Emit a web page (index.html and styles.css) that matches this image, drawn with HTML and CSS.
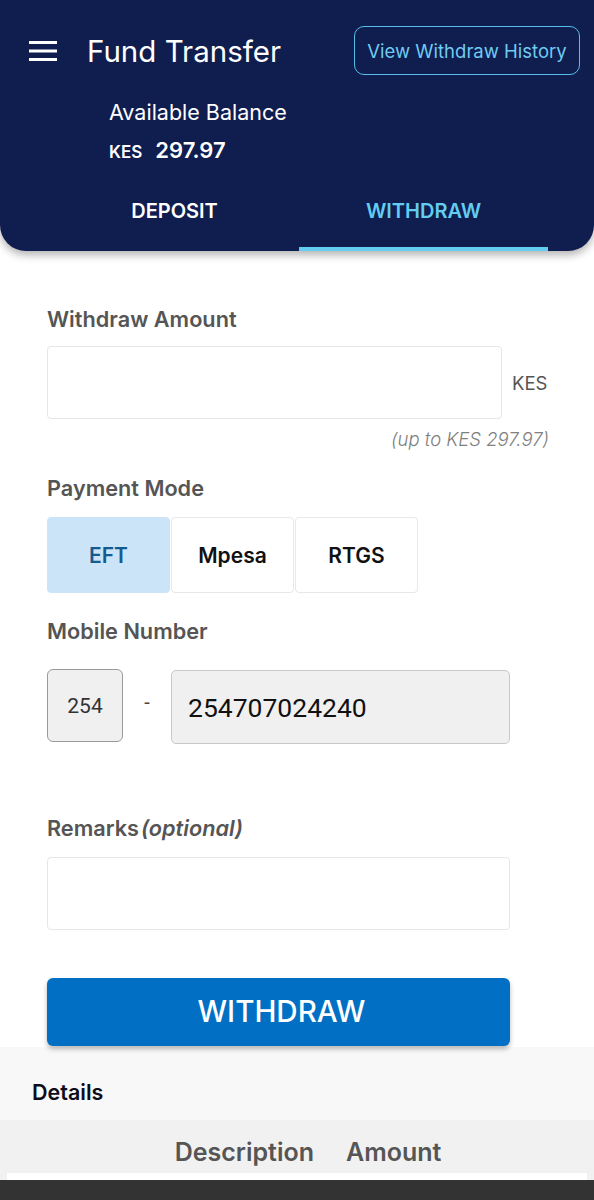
FILE: index.html
```html
<!DOCTYPE html>
<html>
<head>
<meta charset="utf-8">
<link rel="stylesheet" href="styles.css">
</head>
<body>
<div class="page">
  <header class="header">
    <div class="topbar">
      <svg class="menu" width="28" height="20" viewBox="0 0 28 20">
        <rect x="0" y="0" width="28" height="3" fill="#ffffff"/>
        <rect x="0" y="8.5" width="28" height="3" fill="#ffffff"/>
        <rect x="0" y="17" width="28" height="3" fill="#ffffff"/>
      </svg>
      <h1 class="title">Fund Transfer</h1>
      <button class="history-btn">View Withdraw History</button>
    </div>
    <div class="balance">
      <div class="balance-label">Available Balance</div>
      <div class="balance-value"><span class="cur">KES</span><span class="amt">297.97</span></div>
    </div>
    <nav class="tabs">
      <div class="tab">DEPOSIT</div>
      <div class="tab active">WITHDRAW</div>
    </nav>
  </header>

  <main class="form">
    <div class="label first">Withdraw Amount</div>
    <div class="amount-row">
      <div class="field amount-field"></div>
      <span class="unit">KES</span>
    </div>
    <div class="hint">(up to KES 297.97)</div>

    <div class="label mode-label">Payment Mode</div>
    <div class="modes">
      <div class="mode selected">EFT</div>
      <div class="mode">Mpesa</div>
      <div class="mode">RTGS</div>
    </div>

    <div class="label mobile-label">Mobile Number</div>
    <div class="mobile-row">
      <div class="code">254</div>
      <span class="dash">-</span>
      <div class="number">254707024240</div>
    </div>

    <div class="label remarks-label">Remarks<em class="opt">(optional)</em></div>
    <div class="field remarks-field"></div>

    <button class="submit">WITHDRAW</button>
  </main>

  <section class="details">
    <div class="details-title">Details</div>
  </section>
  <div class="table-head">
    <div class="cols">
      <span>Description</span>
      <span>Amount</span>
    </div>
    <div class="table-body"></div>
  </div>
  <div class="bottom-bar"></div>
</div>
</body>
</html>
```
FILE: styles.css
```css
* { box-sizing: border-box; }
html, body { margin: 0; padding: 0; background: #ffffff; }
body { font-family: Inter, "Noto Sans", sans-serif; width: 594px; height: 1200px; overflow: hidden; }
.page { display: flex; flex-direction: column; }

.header {
  background: #101d4f;
  border-radius: 0 0 26px 26px;
  box-shadow: 0 4px 8px rgba(0, 0, 0, 0.3);
  padding-top: 26px;
  color: #ffffff;
  position: relative;
  z-index: 2;
}
.topbar { display: flex; align-items: center; height: 49px; padding: 0 14px 0 29px; }
.menu { flex: none; }
.title {
  margin: 0 0 0 30px;
  font-family: Inter, sans-serif;
  font-weight: 400;
  font-size: 29.5px;
  line-height: 34px;
  color: #ffffff;
}
.history-btn {
  margin-left: auto;
  width: 226px;
  height: 49px;
  background: transparent;
  border: 1.5px solid #56bfe9;
  border-radius: 10px;
  color: #6fcbf0;
  font-family: Inter, sans-serif;
  font-size: 18.5px;
  padding: 0;
}
.balance { padding-left: 109px; }
.balance-label {
  margin-top: 24px;
  font-family: Inter, sans-serif;
  font-size: 21.5px;
  line-height: 26px;
}
.balance-value { margin-top: 11px; line-height: 28px; display: flex; align-items: baseline; }
.cur { font-size: 17px; font-weight: 600; margin-right: 13px; }
.amt { font-size: 22px; font-weight: 600; }

.tabs { display: flex; margin: 15px 46px 0 50px; }
.tab {
  flex: 1;
  height: 70px;
  display: flex;
  align-items: center;
  justify-content: center;
  padding-bottom: 6px;
  border-bottom: 4px solid transparent;
  font-size: 20px;
  font-weight: 600;
  color: #ffffff;
}
.tab.active { color: #62cdf1; border-bottom-color: #62cdf1; }

.form { padding: 0 45px 0 47px; display: flex; flex-direction: column; }
.label {
  font-size: 21.7px;
  line-height: 28px;
  font-weight: 600;
  color: #555555;
}
.label.first { margin-top: 54px; }
.amount-row { display: flex; align-items: center; margin-top: 13px; }
.field {
  height: 73px;
  border: 1px solid #e6e6e6;
  border-radius: 4px;
  background: #ffffff;
}
.amount-field { width: 455px; }
.unit { margin-left: 10px; font-size: 18.5px; color: #555555; }
.hint {
  margin-top: 9px;
  text-align: right;
  font-size: 18.5px;
  line-height: 22px;
  font-style: italic;
  font-weight: 300;
  color: #808080;
}
.mode-label { margin-top: 24px; }
.modes { display: flex; gap: 1px; margin-top: 15px; }
.mode {
  width: 123px;
  height: 76px;
  display: flex;
  align-items: center;
  justify-content: center;
  border: 1px solid #e8e8e8;
  border-radius: 4px;
  font-size: 21px;
  font-weight: 600;
  color: #111111;
}
.mode.selected { background: #cce4f8; border-color: #cce4f8; color: #165b8f; }

.mobile-label { margin-top: 24px; }
.mobile-row { display: flex; align-items: flex-start; margin-top: 24px; }
.code {
  width: 76px;
  height: 73px;
  display: flex;
  align-items: center;
  justify-content: center;
  background: #f0f0f0;
  border: 1px solid #9a9a9a;
  border-radius: 6px;
  font-family: Roboto, sans-serif;
  font-size: 21px;
  color: #333333;
}
.dash {
  width: 48px;
  text-align: center;
  font-family: Roboto, sans-serif;
  font-size: 20px;
  line-height: 24px;
  margin-top: 21px;
  color: #444444;
}
.number {
  width: 339px;
  height: 74px;
  margin-top: 1px;
  display: flex;
  align-items: center;
  padding-left: 16px;
  background: #f0f0f0;
  border: 1px solid #c8c8c8;
  border-radius: 5px;
  font-family: Roboto, sans-serif;
  font-size: 26.5px;
  color: #111111;
}
.remarks-label { margin-top: 70px; }
.opt { font-style: italic; margin-left: 2px; }
.remarks-field { width: 463px; margin-top: 15px; }

.submit {
  margin-top: 48px;
  width: 463px;
  height: 68px;
  background: #0170c4;
  border: none;
  border-radius: 6px;
  color: #ffffff;
  font-family: Inter, sans-serif;
  font-size: 29.5px;
  font-weight: 500;
  box-shadow: 0 3px 5px rgba(0, 0, 0, 0.28);
  position: relative;
  z-index: 1;
  padding: 0 0 3px 6px;
}

.details { margin-top: 1px; background: #f8f8f8; height: 73px; padding: 32px 0 0 32px; }
.details-title { font-size: 21.5px; line-height: 26px; font-weight: 600; color: #0d0d1a; }
.table-head { background: #f1f1f1; padding-top: 17px; }
.cols {
  display: flex;
  justify-content: center;
  gap: 32px;
  padding-left: 22px;
  font-size: 25px;
  line-height: 30px;
  font-weight: 600;
  color: #555555;
  height: 36px;
}
.table-body { margin: 0 7px; height: 7px; background: #ffffff; }
.bottom-bar { height: 20px; background: #333333; }
```
